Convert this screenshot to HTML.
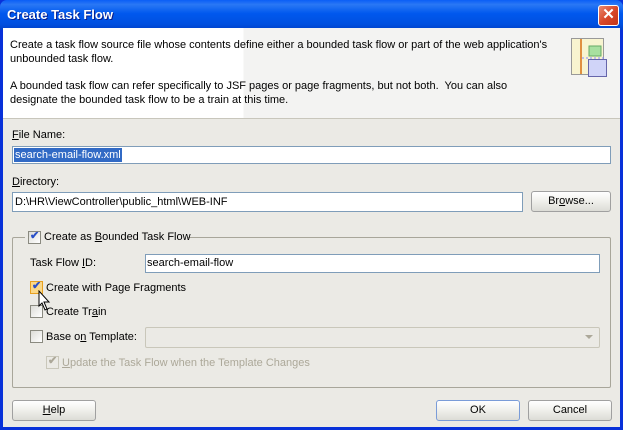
<!DOCTYPE html>
<html><head><style>
*{box-sizing:border-box;margin:0;padding:0}
body{width:623px;height:430px;overflow:hidden;font-family:"Liberation Sans",Tahoma,sans-serif;font-size:11px;color:#000;background:#0831d9;position:relative}
.a{position:absolute}
.title{left:0;top:0;width:623px;height:30px;background:linear-gradient(#0a5ef7 0%,#2a78f5 15%,#0058ee 45%,#0050e0 80%,#0040c8 100%);border-radius:7px 7px 0 0}
.title span{position:absolute;left:7px;top:7px;color:#fff;font-weight:bold;font-size:13px;text-shadow:1px 1px #0a1e8a}
.close{left:598px;top:5px;width:21px;height:21px;background:linear-gradient(135deg,#e88a70,#d8482a 50%,#c23518);border:1px solid #fff;border-radius:3px;color:#fff;font-weight:bold;font-size:15px;text-align:center;line-height:18px}
.body{left:3px;top:28px;width:617px;height:399px;background:#ebeae5}
.hdr{left:3px;top:28px;width:617px;height:90px;background:linear-gradient(90deg,#fff 0%,#fff 39%,#f3f3f2 39%,#f3f3f2 100%)}
.hdr:after{content:"";position:absolute;left:0;right:0;bottom:-1px;height:1px;background:#c8c6bc}
.t{position:absolute;white-space:nowrap}
.in{position:absolute;background:#fff;border:1px solid #7f9db9}
.btn{position:absolute;height:21px;border:1px solid #a0a0a0;border-radius:3px;background:linear-gradient(#fff,#f3f3ef 40%,#dcdcd6 100%);text-align:center;line-height:19px}
.cb{position:absolute;width:13px;height:13px;border:1px solid #8a8a80;background:linear-gradient(135deg,#dcdcd7,#fff)}
.chk{position:absolute;left:1px;top:-3px;color:#2a50c8;font-size:11px;font-weight:bold}
u{text-decoration:underline}
</style></head><body>
<div class="a title"><span>Create Task Flow</span></div>
<div class="a close">✕</div>
<div class="a body"></div>
<div class="a hdr"></div>
<div class="t" style="left:10px;top:39px">Create a task flow source file whose contents define either a bounded task flow or part of the web application's</div>
<div class="t" style="left:10px;top:53px">unbounded task flow.</div>
<div class="t" style="left:10px;top:80px">A bounded task flow can refer specifically to JSF pages or page fragments, but not both.&nbsp; You can also</div>
<div class="t" style="left:10px;top:94px">designate the bounded task flow to be a train at this time.</div>
<svg class="a" style="left:570px;top:37px" width="42" height="42">
<rect x="1.5" y="1.5" width="32" height="36" fill="#f8f4d0" stroke="#999"/>
<rect x="10" y="2" width="2" height="35" fill="#e09040"/>
<rect x="19" y="9" width="12" height="10" fill="#a8e0a0" stroke="#6a6"/>
<line x1="12" y1="21" x2="34" y2="21" stroke="#88f" stroke-dasharray="2 2"/>
<rect x="18.5" y="22.5" width="18" height="17" fill="#d0d4f8" stroke="#66a"/>
</svg>
<div class="t" style="left:12px;top:129px"><u>F</u>ile Name:</div>
<div class="in" style="left:12px;top:146px;width:599px;height:18px"><span style="position:absolute;left:1px;top:1px;background:#316ac5;color:#fff;padding:0 1px;line-height:14px">search-email-flow.xml</span></div>
<div class="t" style="left:12px;top:176px"><u>D</u>irectory:</div>
<div class="in" style="left:12px;top:192px;width:511px;height:20px"><span style="position:absolute;left:2px;top:3px">D:\HR\ViewController\public_html\WEB-INF</span></div>
<div class="btn" style="left:531px;top:191px;width:80px">Br<u>o</u>wse...</div>
<div class="a" style="left:12px;top:237px;width:599px;height:151px;border:1px solid #a8a69a;border-radius:2px"></div>
<div class="a" style="left:25px;top:230px;width:163px;height:14px;background:#ebeae5"></div>
<div class="cb" style="left:28px;top:231px"><span class="chk">✔</span></div>
<div class="t" style="left:44px;top:231px">Create as <u>B</u>ounded Task Flow</div>
<div class="t" style="left:30px;top:257px">Task Flow <u>I</u>D:</div>
<div class="in" style="left:145px;top:254px;width:455px;height:19px"><span style="position:absolute;left:1px;top:2px">search-email-flow</span></div>
<div class="cb" style="left:30px;top:281px;border-color:#e8a020;background:#fbd888"><span class="chk">✔</span></div>
<div class="t" style="left:46px;top:282px">Create with Page Fra<u>g</u>ments</div>
<div class="cb" style="left:30px;top:305px"></div>
<div class="t" style="left:46px;top:306px">Create Tr<u>a</u>in</div>
<svg class="a" style="left:38px;top:290px" width="14" height="22"><path d="M1 1 L1 16 L4 13 L7 20 L9 19 L6 12 L11 12 Z" fill="#fff" stroke="#000"/></svg>
<div class="cb" style="left:30px;top:330px"></div>
<div class="t" style="left:46px;top:331px">Base o<u>n</u> Template:</div>
<div class="a" style="left:145px;top:327px;width:455px;height:21px;border:1px solid #c9c7ba;border-radius:2px;background:#ebeae5"></div>
<div class="a" style="left:585px;top:335px;width:0;height:0;border-left:4px solid transparent;border-right:4px solid transparent;border-top:4px solid #aca899"></div>
<div class="cb" style="left:46px;top:356px;border-color:#c9c7ba;background:#ebeae5"><span class="chk" style="color:#aca899">✔</span></div>
<div class="t" style="left:62px;top:357px;color:#aca899"><u>U</u>pdate the Task Flow when the Template Changes</div>
<div class="btn" style="left:12px;top:400px;width:84px"><u>H</u>elp</div>
<div class="btn" style="left:436px;top:400px;width:84px;border-color:#7a9cd8">OK</div>
<div class="btn" style="left:528px;top:400px;width:84px">Cancel</div>
</body></html>
